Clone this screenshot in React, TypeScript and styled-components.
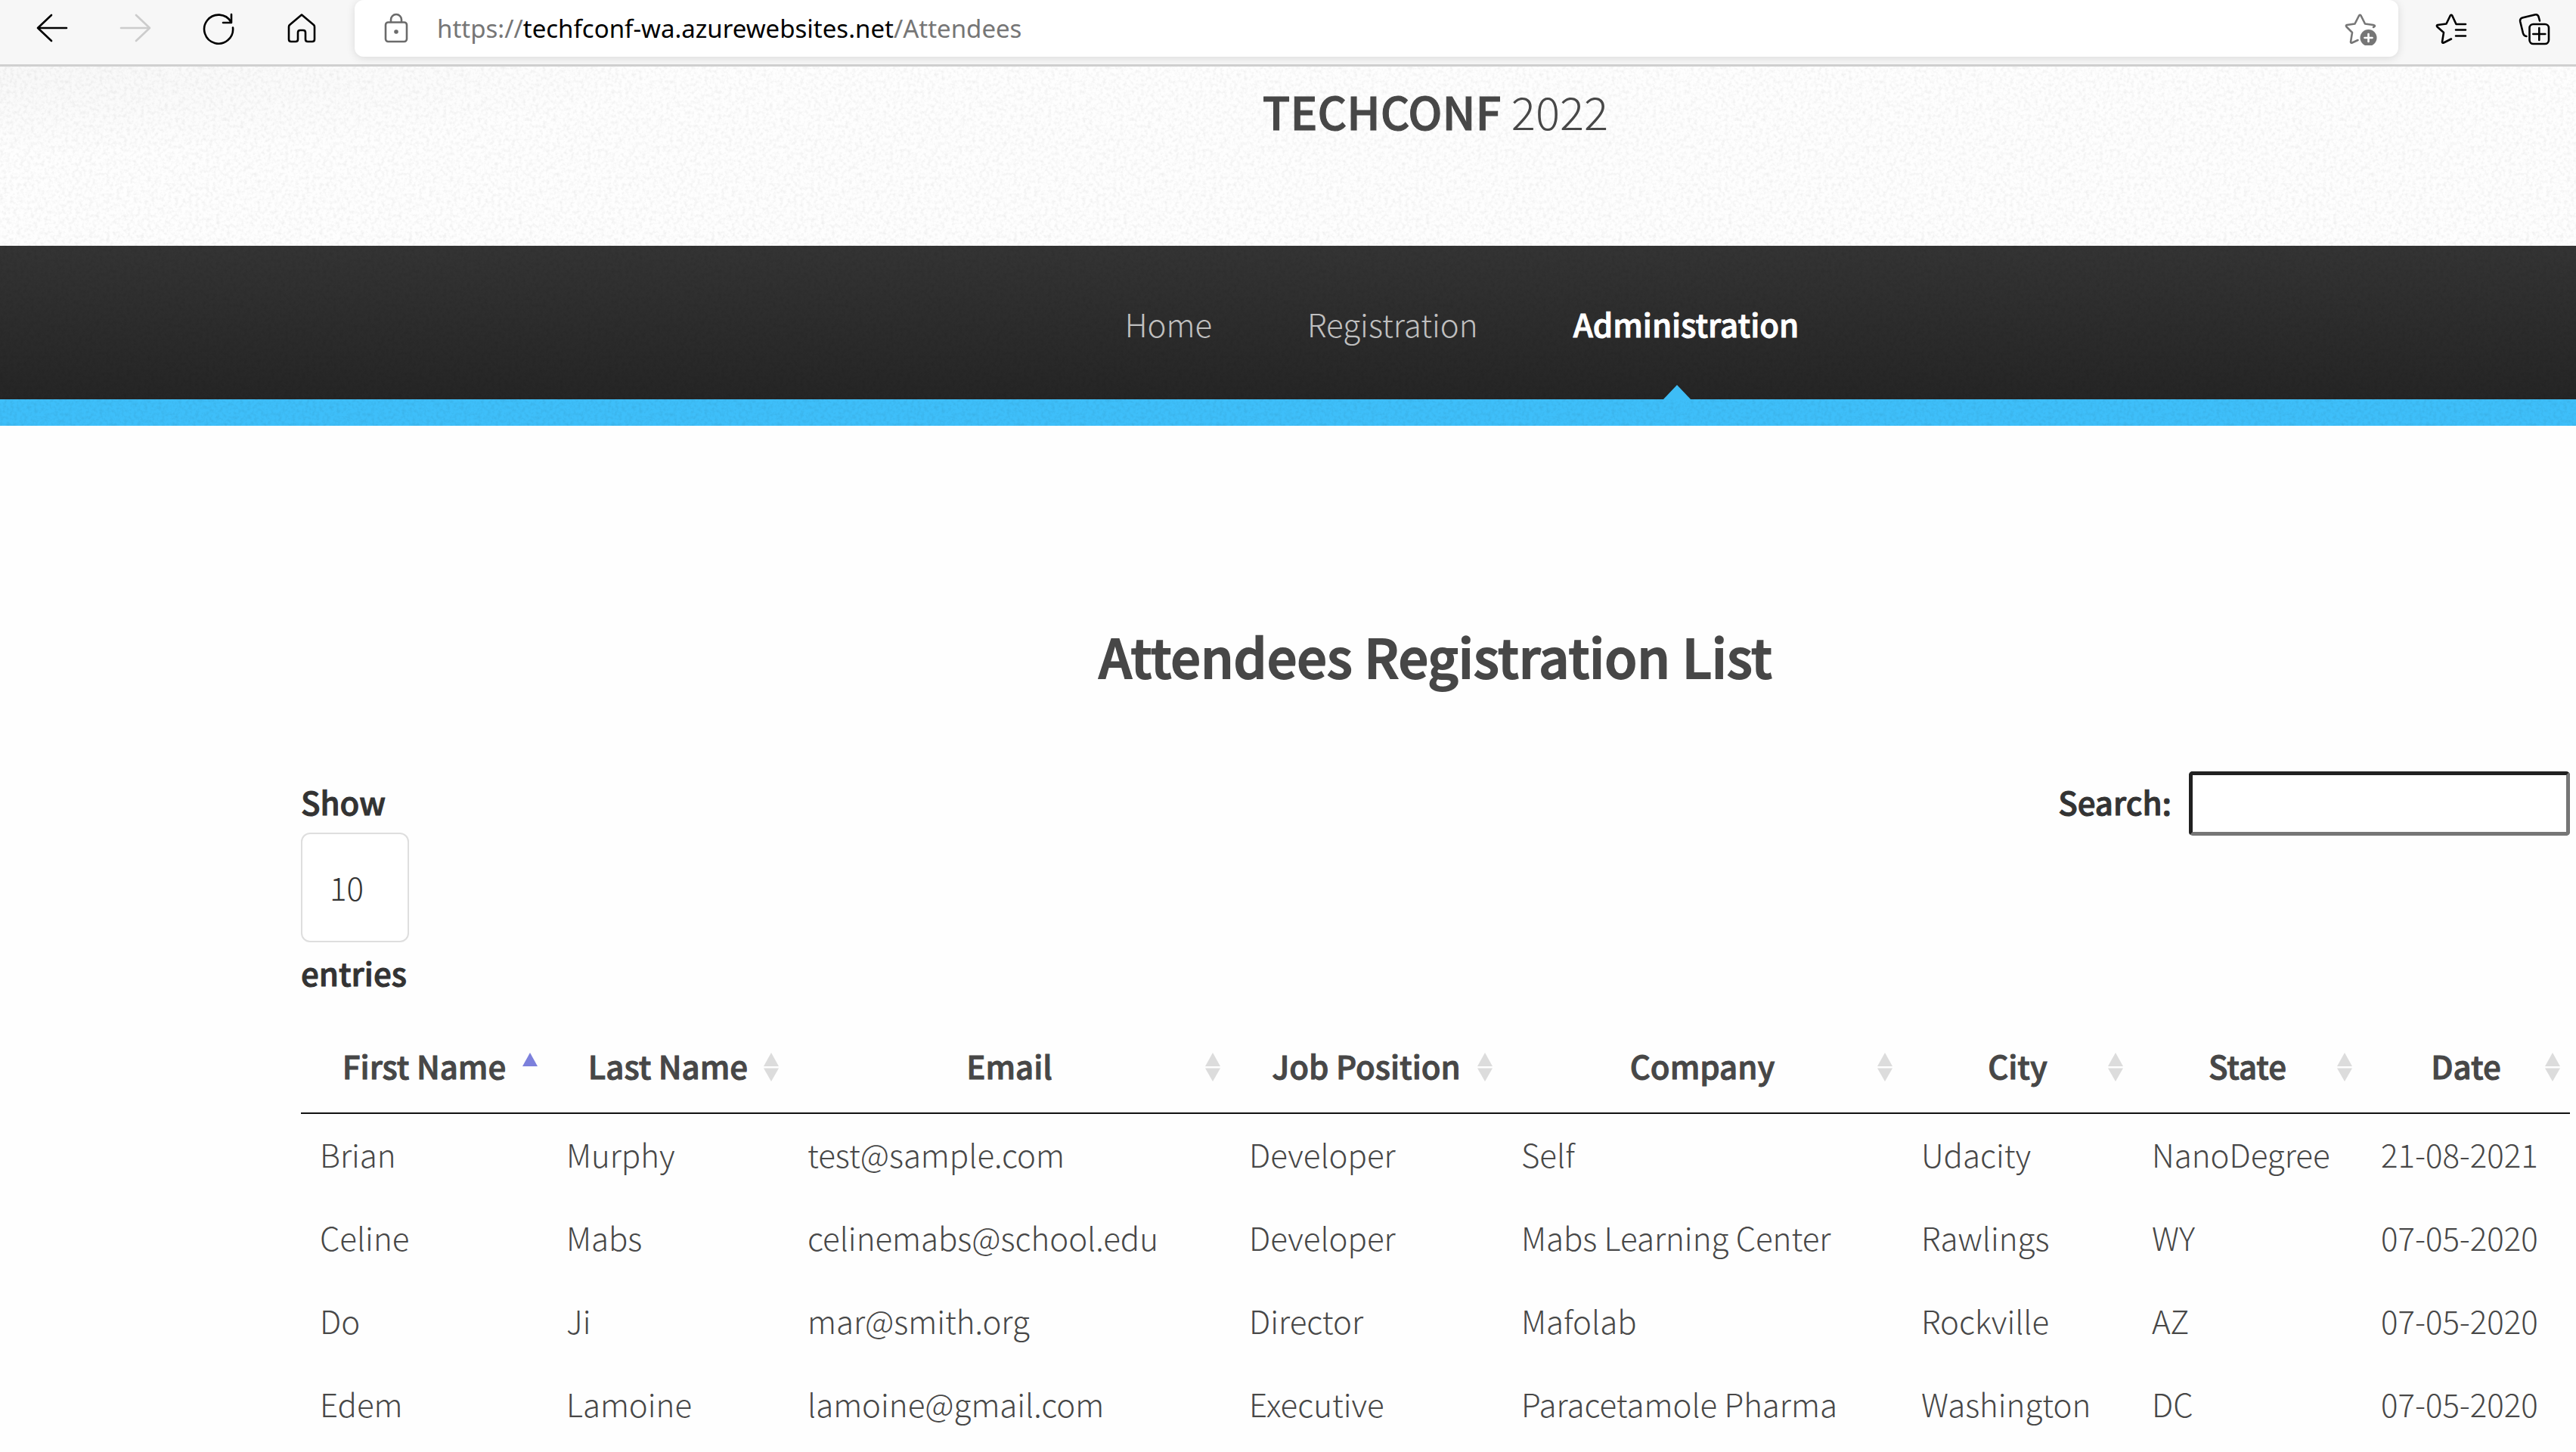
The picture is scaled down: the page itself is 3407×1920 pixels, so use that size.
import React from "react";
import styled, { createGlobalStyle, css } from "styled-components";

const bodyFont = `"Noto Sans CJK SC", "Noto Sans", sans-serif`;
const chromeFont = `"Noto Sans", "Open Sans", sans-serif`;

const grain = (alpha: string) =>
  `url("data:image/svg+xml,%3Csvg xmlns='http://www.w3.org/2000/svg' width='400' height='400'%3E%3Cfilter id='n' x='0' y='0' width='100%25' height='100%25'%3E%3CfeTurbulence type='fractalNoise' baseFrequency='0.22' numOctaves='3' stitchTiles='stitch'/%3E%3CfeColorMatrix values='0 0 0 0 0 0 0 0 0 0 0 0 0 0 0 0 0 0 ${alpha}'/%3E%3C/filter%3E%3Crect width='400' height='400' filter='url(%23n)'/%3E%3C/svg%3E")`;

const GlobalStyle = createGlobalStyle`
  *, *::before, *::after { box-sizing: border-box; }
  html { background: #fefefe; }
  body {
    margin: 0;
    overflow: hidden;
    background: #fefefe;
    color: #474747;
    font-family: ${bodyFont};
    font-size: 42px;
    font-weight: 300;
    line-height: 70px;
  }
`;

const semibold = css`
  font-weight: 500;
  -webkit-text-stroke: 1px currentColor;
`;

const Toolbar = styled.div`
  display: flex;
  height: 88px;
  padding-left: 14px;
  background: #f7f7f7;
  border-bottom: 3px solid #d0d0d0;
`;

const IconButton = styled.button<{ $muted?: boolean }>`
  display: flex;
  align-items: center;
  justify-content: center;
  width: 110px;
  height: 75px;
  padding: 0;
  border: 0;
  background: none;
  color: ${(p) => (p.$muted ? "#cccccc" : "#000")};
`;

const AddressBar = styled.div`
  display: flex;
  flex: 1;
  align-items: center;
  height: 75px;
  margin: 0 15px;
  padding: 0 27px 0 34px;
  border-radius: 12px;
  background: #fff;
  box-shadow: 0 2px 12px rgba(0, 0, 0, 0.12);
  color: #6b6b6b;
`;

const Address = styled.a`
  flex: 1;
  margin-left: 31px;
  color: #767676;
  font-family: ${chromeFont};
  font-size: 33px;
  font-weight: 400;
  line-height: 48px;
  text-decoration: none;
`;

const Host = styled.span`
  color: #000;
`;

const StarButton = styled.button`
  display: flex;
  padding: 0;
  border: 0;
  background: none;
  color: #767676;
`;

const Glyph = styled.svg`
  display: block;
  width: 44px;
  height: 44px;
  fill: none;
  stroke: currentColor;
  stroke-width: 2.6;
  stroke-linecap: round;
  stroke-linejoin: round;
`;

const pageInset = css`
  padding-left: 398px;
  padding-right: 8px;
`;

const Header = styled.header`
  ${pageInset}
  padding-top: 12px;
  padding-bottom: 133px;
  background:
    ${grain("0.12 -0.05")},
    radial-gradient(ellipse 900px 120px at 0 0, rgba(0, 0, 0, 0.025), transparent),
    #fefefe;
  text-align: center;
`;

const Brand = styled.h1`
  margin: 0;
  font-size: 60px;
  font-weight: 300;
  line-height: 92px;
`;

const Strong = styled.strong`
  ${semibold}
`;

const Nav = styled.nav`
  ${pageInset}
  display: flex;
  justify-content: center;
  background: ${grain("0.16 -0.06")}, linear-gradient(#343434, #252525);
`;

const Stripe = styled.div`
  height: 35px;
  background: ${grain("0.13 -0.05")}, #3ebffa;
`;

const NavList = styled.ul`
  display: flex;
  gap: 102px;
  margin: 0;
  padding: 0 0 0 46px;
  list-style: none;
`;

const NavItem = styled.li<{ $active?: boolean }>`
  position: relative;
  padding: 68px 0 65px 24px;

  ${(p) =>
    p.$active &&
    css`
      &::after {
        content: "";
        position: absolute;
        left: 50%;
        bottom: 0;
        margin-left: -18px;
        border: 18px solid transparent;
        border-top: 0;
        border-bottom: 19px solid #3ebdf6;
      }
    `}
`;

const NavLink = styled.a<{ $active?: boolean }>`
  color: ${(p) => (p.$active ? "#fff" : "#c0c0c0")};
  text-decoration: none;
  ${(p) => p.$active && semibold}
`;

const Main = styled.main`
  ${pageInset}
  padding-top: 254px;
`;

const Title = styled.h2`
  ${semibold}
  margin: 0 0 103px;
  font-size: 70px;
  line-height: 100px;
  text-align: center;
  -webkit-text-stroke-width: 2px;
`;

const Controls = styled.div`
  display: flex;
  align-items: flex-start;
  justify-content: space-between;
  margin-bottom: 21px;
  color: #333;
  line-height: 80px;
`;

const LengthLabel = styled.label`
  ${semibold}
  display: flex;
  flex-direction: column;
  align-items: flex-start;
`;

const LengthSelect = styled.select`
  appearance: none;
  width: 143px;
  height: 145px;
  margin-top: 1px;
  padding: 0 36px 2px;
  border: 2px solid #dedede;
  border-radius: 12px;
  background: #fff;
  color: #333;
  font-family: ${bodyFont};
  font-size: 42px;
  font-weight: 300;
  line-height: 70px;
  -webkit-text-stroke-width: 0;
`;

const SearchLabel = styled.label`
  ${semibold}
  display: flex;
  align-items: flex-start;
  gap: 23px;
`;

const SearchInput = styled.input`
  width: 504px;
  height: 85px;
  padding: 0 12px;
  border: 5px solid;
  border-color: #212121 #767676 #767676 #212121;
  border-radius: 5px;
  background: #fff;
  color: #333;
  font-family: ${bodyFont};
  font-size: 42px;
  font-weight: 300;
  outline: none;
  -webkit-text-stroke-width: 0;
`;

const Table = styled.table`
  width: 100%;
  table-layout: fixed;
  border-collapse: separate;
  border-spacing: 0;
`;

const Column = styled.col<{ $width: number }>`
  width: ${(p) => p.$width}px;
`;

const HeadCell = styled.th`
  padding: 0;
  border-bottom: 2px solid #111;
`;

const SortButton = styled.button`
  ${semibold}
  position: relative;
  display: block;
  width: 100%;
  padding: 27px 0;
  border: 0;
  background: none;
  color: #474747;
  font-family: ${bodyFont};
  font-size: 42px;
  line-height: 70px;
  text-align: center;
  white-space: nowrap;
`;

const SortMark = styled.svg`
  position: absolute;
  top: 45px;
  right: 12px;
  width: 22px;
  height: 38px;
`;

const Cell = styled.td`
  padding: 18px 25px 22px;
  white-space: nowrap;
`;

const columns = [
  { name: "First Name", width: 326 },
  { name: "Last Name", width: 319 },
  { name: "Email", width: 584 },
  { name: "Job Position", width: 360 },
  { name: "Company", width: 529 },
  { name: "City", width: 305 },
  { name: "State", width: 303 },
  { name: "Date", width: 275 },
];

const attendees = [
  ["Brian", "Murphy", "test@sample.com", "Developer", "Self", "Udacity", "NanoDegree", "21-08-2021"],
  ["Celine", "Mabs", "celinemabs@school.edu", "Developer", "Mabs Learning Center", "Rawlings", "WY", "07-05-2020"],
  ["Do", "Ji", "mar@smith.org", "Director", "Mafolab", "Rockville", "AZ", "07-05-2020"],
  ["Edem", "Lamoine", "lamoine@gmail.com", "Executive", "Paracetamole Pharma", "Washington", "DC", "07-05-2020"],
];

const links = ["Home", "Registration", "Administration"];

function BrowserToolbar() {
  return (
    <Toolbar>
      <IconButton aria-label="Back">
        <Glyph viewBox="0 0 44 44"><path d="M41 21H3M21 4 3 21l18 17" /></Glyph>
      </IconButton>
      <IconButton aria-label="Forward" $muted>
        <Glyph viewBox="0 0 44 44"><path d="M3 21h38M23 4l18 17-18 17" /></Glyph>
      </IconButton>
      <IconButton aria-label="Refresh">
        <Glyph viewBox="0 0 44 44"><path d="M41 20.500A19 19 0 1 1 38.500 13M39 3v11H28" /></Glyph>
      </IconButton>
      <IconButton aria-label="Home">
        <Glyph viewBox="0 0 44 44">
          <path d="M22 3.500 6 17q-1 1-1 2.500V36q0 3 3 3h6q3 0 3-3v-9q0-3 3-3h4q3 0 3 3v9q0 3 3 3h6q3 0 3-3V19.500q0-1.500-1-2.500Z" />
        </Glyph>
      </IconButton>
      <AddressBar>
        <Glyph viewBox="0 0 44 44">
          <rect x="7" y="13.500" width="28" height="25.500" rx="3.500" />
          <path d="M14 13v-3a7 7 0 0 1 14 0v3" />
          <circle cx="21" cy="26" r="1.500" fill="currentColor" />
        </Glyph>
        <Address href="#attendees">
          https://<Host>techfconf-wa.azurewebsites.net</Host>/Attendees
        </Address>
        <StarButton aria-label="Add to favorites">
          <Glyph viewBox="0 0 44 44">
            <path d="M38 20q4-2 0-3l-11-1.500-5.500-11q-1.200-1.500-2.400 0L13.500 15.500 3 17q-2 .8-.5 2.500L10 27 8 39.500q.2 1.800 2 1L17.500 37" />
            <circle cx="31.500" cy="34" r="11" fill="currentColor" stroke="none" />
            <path d="M31.500 29v10M26.500 34h10" stroke="#fff" />
          </Glyph>
        </StarButton>
      </AddressBar>
      <IconButton aria-label="Favorites">
        <Glyph viewBox="0 0 44 44">
          <path d="M41 16H28.500l-5.300-11.500q-1.200-1.500-2.400 0L15.500 15.500 4 17q-2 .8-.5 2.500L12 27l-2 12.500q.2 1.800 2 1L22 35.500M28 23.500h13M28 31.500h13" />
        </Glyph>
      </IconButton>
      <IconButton aria-label="Collections">
        <Glyph viewBox="0 0 44 44">
          <rect x="15.500" y="16" width="25.500" height="26" rx="5" />
          <path d="M28.300 21v16M20.300 29h16M29 11.500 27.500 6q-1.200-3.500-5-2.500L6 7.500q-3.500 1.200-2.800 5L7 28q1 3.500 4.500 4" />
        </Glyph>
      </IconButton>
    </Toolbar>
  );
}

function SortIcon({ active }: { active: boolean }) {
  return (
    <SortMark viewBox="0 0 22 38" fill={active ? "#7c80dc" : "#dcdcdc"} aria-hidden="true">
      <path d="M11 0 21 18H1Z" />
      {!active && <path d="M11 38 1 20.500H21Z" />}
    </SortMark>
  );
}

export default function App() {
  return (
    <>
      <GlobalStyle />
      <BrowserToolbar />
      <Header>
        <Brand><Strong>TECHCONF</Strong> 2022</Brand>
      </Header>
      <Nav>
        <NavList>
          {links.map((link) => {
            const active = link === "Administration";
            return (
              <NavItem key={link} $active={active}>
                <NavLink href={`#${link.toLowerCase()}`} $active={active}>{link}</NavLink>
              </NavItem>
            );
          })}
        </NavList>
      </Nav>
      <Stripe />
      <Main id="attendees">
        <Title>Attendees Registration List</Title>
        <Controls>
          <LengthLabel>
            Show
            <LengthSelect defaultValue="10">
              <option>10</option>
              <option>25</option>
              <option>50</option>
            </LengthSelect>
            entries
          </LengthLabel>
          <SearchLabel>
            Search:
            <SearchInput type="search" />
          </SearchLabel>
        </Controls>
        <Table>
          <colgroup>
            {columns.map((c) => <Column key={c.name} $width={c.width} />)}
          </colgroup>
          <thead>
            <tr>
              {columns.map((c, i) => (
                <HeadCell key={c.name} scope="col">
                  <SortButton>
                    {c.name}
                    <SortIcon active={i === 0} />
                  </SortButton>
                </HeadCell>
              ))}
            </tr>
          </thead>
          <tbody>
            {attendees.map((row) => (
              <tr key={row[2]}>
                {row.map((value, i) => <Cell key={i}>{value}</Cell>)}
              </tr>
            ))}
          </tbody>
        </Table>
      </Main>
    </>
  );
}
